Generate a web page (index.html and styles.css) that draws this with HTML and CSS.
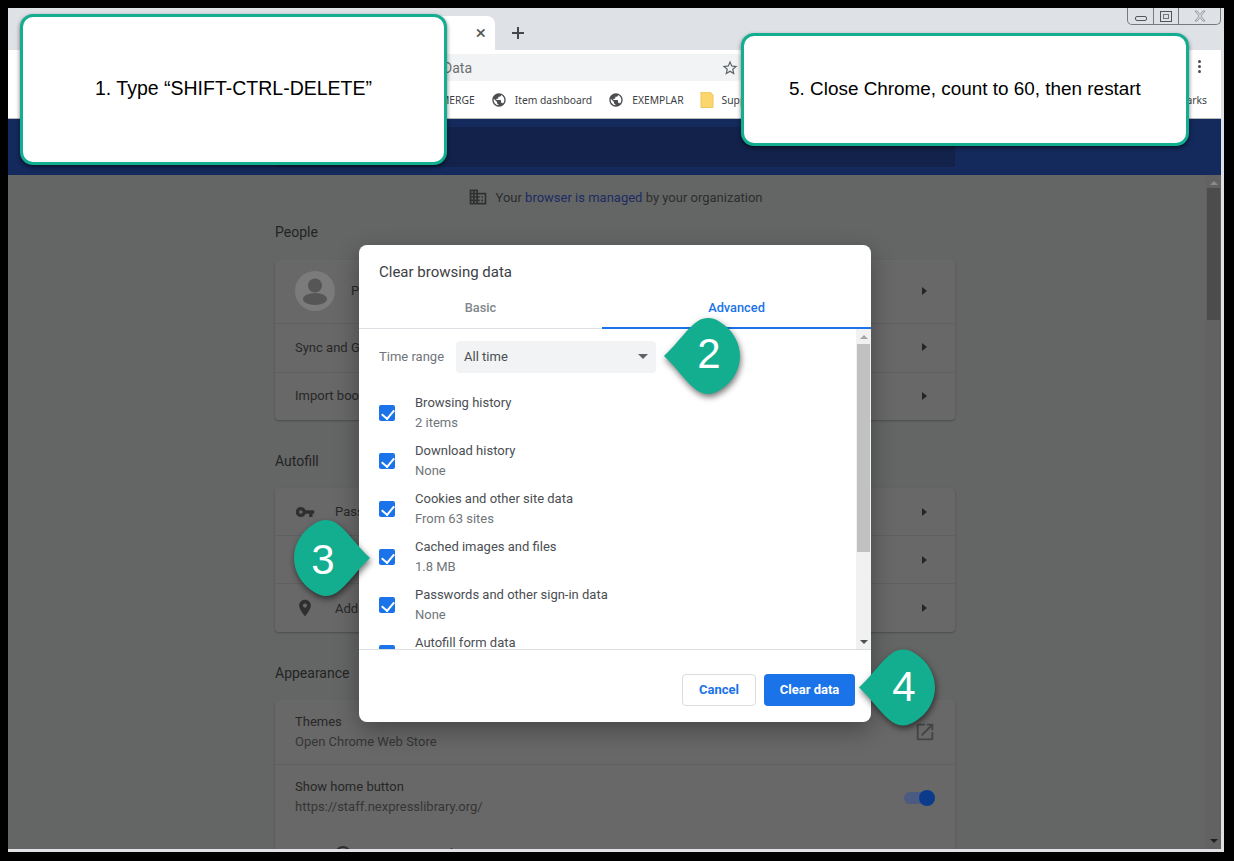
FILE: index.html
```html
<!DOCTYPE html>
<html lang="en">

<head>
    <title>Clear browsing data</title>
    <link rel="stylesheet" href="styles.css">
</head>

<body>
    <div class="window">
        <div class="tabstrip">
            <div class="tab">
                <span class="tabTitle">Settings - Clear browsing data</span>
                <span class="tabClose">&#215;</span>
            </div>
            <svg class="newTab" width="14" height="14" viewBox="0 0 14 14"><path d="M6 1h2v5h5v2H8v5H6V8H1V6h5z" /></svg>
            <div class="winControls">
                <span class="winBtn minBtn"><i></i></span>
                <span class="winBtn maxBtn"><i></i></span>
                <span class="winBtn closeBtn">
                    <svg width="14" height="12" viewBox="0 0 14 12"><path d="M2 1h2l3 3.5L10 1h2L8 6l4 5h-2L7 7.5 4 11H2l4-5z" /></svg>
                </span>
            </div>
        </div>

        <div class="toolbar">
            <div class="omnibox">
                <span class="url">Chrome | chrome://settings/clearBrowserData</span>
                <svg class="star" width="18" height="18" viewBox="0 0 24 24"><path d="M22 9.24l-7.19-.62L12 2 9.19 8.63 2 9.24l5.46 4.73L5.82 21 12 17.27 18.18 21l-1.63-7.03L22 9.24zM12 15.4l-3.76 2.27 1-4.28-3.32-2.88 4.38-.38L12 6.1l1.71 4.04 4.38.38-3.32 2.88 1 4.28L12 15.4z" /></svg>
            </div>
            <div class="menuDots"><i></i><i></i><i></i></div>
        </div>

        <div class="bookmarks">
            <span class="bookmark">MERGE</span>
            <span class="bookmark">
                <svg width="16" height="16" viewBox="0 0 24 24"><use href="#globe" /></svg>
                Item dashboard
            </span>
            <span class="bookmark">
                <svg width="16" height="16" viewBox="0 0 24 24"><use href="#globe" /></svg>
                EXEMPLAR
            </span>
            <span class="bookmark">
                <svg width="14" height="16" viewBox="0 0 14 16"><path d="M1 0h9l3 3v12.5H1z" fill="#fbd66f" stroke="#efc458" /></svg>
                Support
            </span>
            <span class="bookmark otherMarks">Other bookmarks</span>
        </div>

        <div class="navy">
            <div class="searchBand"></div>
        </div>

        <div class="main">
            <div class="page">
                <p class="managed">
                    <svg width="20" height="20" viewBox="0 0 24 24"><path d="M12 7V3H2v18h20V7H12zM6 19H4v-2h2v2zm0-4H4v-2h2v2zm0-4H4V9h2v2zm0-4H4V5h2v2zm4 12H8v-2h2v2zm0-4H8v-2h2v2zm0-4H8V9h2v2zm0-4H8V5h2v2zm10 12h-8v-2h2v-2h-2v-2h2v-2h-2V9h8v10zm-2-8h-2v2h2v-2zm0 4h-2v2h2v-2z" /></svg>
                    <span>Your <a class="managedLink">browser is managed</a> by your organization</span>
                </p>

                <h2 class="sectionTitle firstTitle">People</h2>
                <div class="card">
                    <div class="row rowPerson">
                        <span class="avatar">
                            <svg width="40" height="40" viewBox="0 0 40 40"><circle cx="20" cy="14.500" r="7" /><ellipse cx="20" cy="28" rx="12" ry="6" /></svg>
                        </span>
                        <span class="rowText">Person 1</span>
                        <i class="arrow"></i>
                    </div>
                    <div class="row rowMid"><span>Sync and Google services</span><i class="arrow"></i></div>
                    <div class="row rowLast"><span>Import bookmarks and settings</span><i class="arrow"></i></div>
                </div>

                <h2 class="sectionTitle">Autofill</h2>
                <div class="card">
                    <div class="row rowIcon">
                        <svg width="20" height="20" viewBox="0 0 24 24"><path d="M12.65 10C11.83 7.67 9.61 6 7 6c-3.31 0-6 2.69-6 6s2.69 6 6 6c2.61 0 4.83-1.67 5.65-4H17v4h4v-4h2v-4H12.65zM7 14c-1.1 0-2-.9-2-2s.9-2 2-2 2 .9 2 2-.9 2-2 2z" /></svg>
                        <span>Passwords</span><i class="arrow"></i>
                    </div>
                    <div class="row rowIcon">
                        <svg width="20" height="20" viewBox="0 0 24 24"></svg>
                        <span>Payment methods</span><i class="arrow"></i>
                    </div>
                    <div class="row rowIcon rowLast">
                        <svg width="20" height="20" viewBox="0 0 24 24"><path d="M12 2C8.13 2 5 5.130 5 9c0 5.250 7 13 7 13s7-7.750 7-13c0-3.870-3.130-7-7-7zm0 9.500c-1.380 0-2.500-1.120-2.500-2.500s1.120-2.500 2.500-2.500 2.500 1.120 2.500 2.500-1.120 2.500-2.500 2.500z" /></svg>
                        <span>Addresses and more</span><i class="arrow"></i>
                    </div>
                </div>

                <h2 class="sectionTitle">Appearance</h2>
                <div class="card cardOpen">
                    <div class="row rowTwo">
                        <div class="rowStack"><span>Themes</span><small>Open Chrome Web Store</small></div>
                        <svg class="extLink" width="22" height="22" viewBox="0 0 24 24"><path d="M19 19H5V5h7V3H5c-1.110 0-2 .9-2 2v14c0 1.100.89 2 2 2h14c1.100 0 2-.9 2-2v-7h-2v7zM14 3v2h3.590l-9.830 9.830 1.410 1.410L19 6.410V10h2V3h-7z" /></svg>
                    </div>
                    <div class="row rowTwo rowLast">
                        <div class="rowStack"><span>Show home button</span><small>https://staff.nexpresslibrary.org/</small></div>
                        <span class="toggle"><i></i></span>
                    </div>
                    <div class="row rowRadio">
                        <i class="radio"></i><span>New Tab page</span>
                    </div>
                </div>
            </div>

            <div class="pageScroll">
                <i class="arrowUp"></i>
                <div class="pageThumb"></div>
                <i class="arrowDown"></i>
            </div>
        </div>

        <div class="dialog">
            <h1 class="dialogTitle">Clear browsing data</h1>
            <div class="tabs">
                <div class="dlgTab">Basic</div>
                <div class="dlgTab dlgTabOn">Advanced</div>
            </div>
            <div class="dialogBody">
                <div class="options">
                    <div class="timeRange">
                        <span class="timeLabel">Time range</span>
                        <div class="select">All time<i class="selectArrow"></i></div>
                    </div>
                    <div class="option"><i class="check"></i><div><p>Browsing history</p><p class="optSub">2 items</p></div></div>
                    <div class="option"><i class="check"></i><div><p>Download history</p><p class="optSub">None</p></div></div>
                    <div class="option"><i class="check"></i><div><p>Cookies and other site data</p><p class="optSub">From 63 sites</p></div></div>
                    <div class="option"><i class="check"></i><div><p>Cached images and files</p><p class="optSub">1.8 MB</p></div></div>
                    <div class="option"><i class="check"></i><div><p>Passwords and other sign-in data</p><p class="optSub">None</p></div></div>
                    <div class="option"><i class="check"></i><div><p>Autofill form data</p><p class="optSub">None</p></div></div>
                </div>
                <div class="dlgScroll">
                    <i class="arrowUp"></i>
                    <div class="dlgThumb"></div>
                    <i class="arrowDown"></i>
                </div>
            </div>
            <div class="dialogFoot">
                <button class="btn btnCancel">Cancel</button>
                <button class="btn btnClear">Clear data</button>
            </div>
        </div>
    </div>

    <div class="callout calloutOne">1. Type &#8220;SHIFT-CTRL-DELETE&#8221;</div>
    <div class="callout calloutFive">5. Close Chrome, count to 60, then restart</div>

    <div class="marker markerTwo">
        <svg width="76" height="78" viewBox="0 0 76 78"><use href="#drop" /></svg>
        <span>2</span>
    </div>
    <div class="marker markerThree">
        <svg width="78" height="78" viewBox="0 0 76 78"><use href="#drop" transform="translate(76 0) scale(-1 1)" /></svg>
        <span>3</span>
    </div>
    <div class="marker markerFour">
        <svg width="76" height="79" viewBox="0 0 76 78"><use href="#drop" /></svg>
        <span>4</span>
    </div>

    <svg class="defs" width="0" height="0">
        <symbol id="globe" viewBox="0 0 24 24">
            <path d="M12 2C6.480 2 2 6.480 2 12s4.480 10 10 10 10-4.480 10-10S17.520 2 12 2zm-1 17.930c-3.950-.49-7-3.850-7-7.930 0-.62.08-1.210.21-1.790L9 15v1c0 1.100.9 2 2 2v1.930zm6.900-2.540c-.26-.81-1-1.390-1.900-1.390h-1v-3c0-.55-.45-1-1-1H8v-2h2c.55 0 1-.45 1-1V7h2c1.100 0 2-.9 2-2v-.41c2.930 1.190 5 4.060 5 7.410 0 2.080-.8 3.970-2.100 5.390z" />
        </symbol>
        <symbol id="drop" viewBox="0 0 76 78">
            <path d="M0 39 C14 26 24 10 34 4 C42 -1 50 1 56 5 C69 13 76 26 76 39 C76 52 69 65 56 73 C50 77 42 79 34 74 C24 68 14 52 0 39 Z" />
        </symbol>
    </svg>
</body>

</html>
```

FILE: styles.css
```css
* {
    margin: 0;
    padding: 0;
    box-sizing: border-box;
}

html,
body {
    width: 100%;
    height: 100%;
    overflow: hidden;
}

body {
    position: relative;
    background-color: #000;
    padding: 8px 0 0 8px;
    font-family: Roboto, "Liberation Sans", sans-serif;
    font-size: 13px;
}

i {
    display: block;
}

.window {
    position: relative;
    width: 1216px;
    height: 844px;
    display: flex;
    flex-direction: column;
    overflow: hidden;
    border-right: 3px solid #dfe1e5;
    border-bottom: 3px solid #dfe1e5;
}

/* browser chrome */
.tabstrip {
    height: 42px;
    flex: none;
    display: flex;
    align-items: flex-end;
    background-color: #dee1e6;
    padding-left: 100px;
}

.tab {
    width: 387px;
    height: 34px;
    display: flex;
    align-items: center;
    justify-content: space-between;
    padding: 0 9px 0 40px;
    background-color: #fff;
    border-radius: 8px 8px 0 0;
    color: #3c4043;
    font-size: 12px;
}

.tabClose {
    font-size: 19px;
    color: #555;
    line-height: 18px;
}

.newTab {
    fill: #45484b;
    margin: 0 0 10px 16px;
}

.winControls {
    display: flex;
    height: 17px;
    margin: 0 0 auto auto;
    border: 1px solid #77797c;
    border-top: 0;
    border-radius: 0 0 5px 5px;
}

.winBtn {
    display: flex;
    align-items: center;
    justify-content: center;
    border-right: 1px solid #77797c;
    width: 25px;
}

.minBtn {
    width: 26px;
}

.minBtn i {
    width: 12px;
    height: 5px;
    margin-top: 5px;
    border: 1px solid #555;
    border-radius: 2px;
}

.maxBtn i {
    width: 12px;
    height: 11px;
    border: 1px solid #555;
    box-shadow: inset 0 0 0 2px #dee1e6, inset 0 0 0 3px #777;
}

.closeBtn {
    width: 41px;
    border-right: 0;
}

.closeBtn svg {
    fill: #dee1e6;
    stroke: #8a8c8f;
    stroke-width: .8;
}

.toolbar {
    height: 32px;
    flex: none;
    display: flex;
    align-items: center;
    background-color: #fff;
}

.omnibox {
    width: 640px;
    height: 27px;
    margin: 3px 0 0 100px;
    display: flex;
    align-items: center;
    justify-content: space-between;
    padding: 0 9px 0 0;
    background-color: #f1f3f4;
    border-radius: 14px;
    color: #6c6f72;
    font-size: 14px;
}

.url {
    width: 364px;
    white-space: nowrap;
    text-align: right;
}

.star {
    fill: #5f6368;
}

.menuDots {
    margin-left: auto;
    margin-right: 20px;
}

.menuDots i {
    width: 3px;
    height: 3px;
    margin: 2px 0;
    background-color: #4a4c4f;
    border-radius: 50%;
}

.bookmarks {
    height: 37px;
    flex: none;
    display: flex;
    align-items: center;
    gap: 16px;
    padding: 0 14px 0 432px;
    background-color: #fff;
    border-bottom: 1px solid #b7b9bb;
    color: #3c4043;
    font-family: "Noto Sans", sans-serif;
    font-size: 10.300px;
}

.bookmark {
    display: flex;
    align-items: center;
    gap: 8px;
    white-space: nowrap;
}

.bookmark svg {
    fill: #4b4d50;
}

.otherMarks {
    margin-left: auto;
}

.navy {
    height: 56px;
    flex: none;
    padding: 8px 266px 8px 267px;
    background-color: #14295c;
}

.searchBand {
    height: 40px;
    background-color: #12224b;
}

/* settings page under the scrim */
.main {
    flex: 1;
    display: flex;
    overflow: hidden;
    background-color: #646665;
}

.page {
    flex: 1;
    padding: 12px 0 0 267px;
    color: #272727;
}

.managed {
    width: 680px;
    height: 20px;
    display: flex;
    align-items: center;
    justify-content: center;
    gap: 8px;
    color: #2d2d2d;
}

.managed svg {
    fill: #303030;
}

.managedLink {
    color: #1c2b63;
}

.sectionTitle {
    height: 20px;
    margin: 31px 0 17px;
    font-size: 14px;
    font-weight: 400;
    line-height: 20px;
    color: #232323;
}

.firstTitle {
    margin-top: 15px;
    margin-bottom: 18px;
}

.card {
    width: 680px;
    background-color: #686868;
    border-radius: 4px;
    box-shadow: 0 1px 2px rgba(0, 0, 0, .25);
}

.cardOpen {
    border-radius: 4px 4px 0 0;
}

.row {
    height: 48px;
    display: flex;
    align-items: center;
    padding: 0 28px 0 20px;
    border-bottom: 1px solid #606060;
    white-space: nowrap;
}

.rowPerson {
    height: 64px;
    gap: 16px;
    padding-bottom: 2px;
}

.rowMid {
    height: 49px;
    padding-bottom: 2px;
}

.rowLast {
    height: 47px;
    border-bottom: 0;
    padding-bottom: 2px;
}

.rowIcon {
    gap: 20px;
}

.rowIcon svg {
    fill: #2f2f2f;
}

.rowIcon.rowLast {
    height: 48px;
    padding-bottom: 0;
}

.rowTwo {
    height: 65px;
    justify-content: space-between;
    padding-right: 20px;
}

.rowTwo.rowLast {
    height: 65px;
}

.rowStack {
    display: flex;
    flex-direction: column;
    gap: 0;
    line-height: 20px;
}

.rowStack small {
    font-size: 13px;
    color: #353535;
}

.avatar {
    width: 40px;
    height: 40px;
    border-radius: 50%;
    overflow: hidden;
    background-color: #7b7b7b;
}

.avatar svg {
    display: block;
    fill: #565656;
}

.arrow {
    width: 0;
    height: 0;
    margin-left: auto;
    border-left: 5px solid #252525;
    border-top: 4px solid transparent;
    border-bottom: 4px solid transparent;
}

.extLink {
    fill: #444;
    margin-right: -1px;
}

.toggle {
    position: relative;
    width: 28px;
    height: 12px;
    margin: 2px 3px 0 0;
    background-color: #4a5a80;
    border-radius: 6px;
}

.toggle i {
    position: absolute;
    top: -2px;
    right: -3px;
    width: 16px;
    height: 16px;
    background-color: #0c3b8c;
    border-radius: 50%;
}

.rowRadio {
    gap: 56px;
    padding: 16px 0 0 60px;
    align-items: flex-start;
    border-bottom: 0;
}

.radio {
    width: 16px;
    height: 16px;
    border: 2px solid #2f2f2f;
    border-radius: 50%;
}

.pageScroll {
    width: 15px;
    flex: none;
    display: flex;
    flex-direction: column;
    align-items: center;
    padding: 6px 0 6px;
    background-color: #616261;
}

.pageThumb {
    width: 13px;
    height: 132px;
    margin: 3px 0 auto;
    background-color: #4c4c4c;
}

.arrowUp,
.arrowDown {
    width: 0;
    height: 0;
    border-left: 4px solid transparent;
    border-right: 4px solid transparent;
}

.pageScroll .arrowUp {
    border-bottom: 4px solid #8a8a8a;
}

.pageScroll .arrowDown {
    border-top: 4px solid #202020;
}

/* dialog */
.dialog {
    position: absolute;
    top: 237px;
    left: 351px;
    width: 512px;
    height: 477px;
    display: flex;
    flex-direction: column;
    overflow: hidden;
    background-color: #fff;
    border-radius: 8px;
    box-shadow: 0 8px 24px rgba(0, 0, 0, .32);
    color: #4a4e52;
}

.dialogTitle {
    height: 43px;
    flex: none;
    padding: 17px 20px 0;
    font-size: 15px;
    font-weight: 400;
    line-height: 20px;
    color: #3c4043;
}

.tabs {
    height: 41px;
    flex: none;
    display: grid;
    grid-template-columns: 243px 269px;
    border-bottom: 1px solid #dcdfe3;
    font-weight: 500;
    font-size: 12.800px;
}

.dlgTab {
    padding-top: 12px;
    text-align: center;
    color: #80868b;
}

.dlgTabOn {
    color: #1a73e8;
    border-bottom: 2px solid #1a73e8;
    margin-bottom: -1px;
}

.dialogBody {
    height: 321px;
    flex: none;
    display: flex;
    overflow: hidden;
    border-bottom: 1px solid #dadce0;
}

.options {
    flex: 1;
    padding: 12px 0 0 20px;
}

.timeRange {
    height: 32px;
    display: flex;
    align-items: center;
    gap: 12px;
    margin-bottom: 16px;
}

.timeLabel {
    color: #70757a;
    margin-top: -1px;
}

.select {
    width: 200px;
    height: 32px;
    display: flex;
    align-items: center;
    justify-content: space-between;
    padding: 0 8px 2px;
    background-color: #f1f3f4;
    border-radius: 4px;
}

.selectArrow {
    width: 0;
    height: 0;
    border-top: 5px solid #5f6368;
    border-left: 5px solid transparent;
    border-right: 5px solid transparent;
}

.option {
    height: 48px;
    display: flex;
    align-items: center;
    gap: 20px;
    line-height: 20px;
}

.check {
    position: relative;
    width: 16px;
    height: 16px;
    flex: none;
    background-color: #1a73e8;
    border-radius: 2px;
}

.check::after {
    content: "";
    position: absolute;
    top: 2px;
    left: 5px;
    width: 6px;
    height: 10px;
    border: solid #fff;
    border-width: 0 2px 2px 0;
    transform: rotate(40deg);
}

.optSub {
    color: #70757a;
}

.dlgScroll {
    width: 15px;
    flex: none;
    display: flex;
    flex-direction: column;
    align-items: center;
    padding: 6px 0 5px;
    background-color: #f1f1f1;
    margin-right: 0;
}

.dlgThumb {
    width: 13px;
    height: 208px;
    margin: 5px 0 auto;
    background-color: #c1c1c1;
}

.dlgScroll .arrowUp {
    border-bottom: 4px solid #a3a3a3;
}

.dlgScroll .arrowDown {
    border-top: 4px solid #505050;
}

.dialogFoot {
    flex: 1;
    display: flex;
    justify-content: flex-end;
    gap: 8px;
    padding: 24px 16px 0 0;
}

.btn {
    height: 32px;
    padding-bottom: 2px;
    border-radius: 4px;
    font-family: Roboto, sans-serif;
    font-size: 13px;
    font-weight: 700;
}

.btnCancel {
    width: 74px;
    background-color: #fff;
    border: 1px solid #dadce0;
    color: #1a73e8;
}

.btnClear {
    width: 91px;
    background-color: #1a73e8;
    border: 0;
    color: #fff;
}

/* annotations on top of the screenshot */
.callout {
    position: absolute;
    display: flex;
    align-items: center;
    justify-content: center;
    background-color: #fff;
    border: 3.500px solid #12ae8f;
    border-radius: 13px;
    box-shadow: 0 2px 4px rgba(0, 0, 0, .55);
    color: #000;
    font-family: "Liberation Sans", Arial, sans-serif;
    padding-bottom: 2px;
}

.calloutOne {
    top: 14px;
    left: 20px;
    width: 427px;
    height: 151px;
    font-size: 19.500px;
}

.calloutFive {
    top: 33px;
    left: 741px;
    width: 448px;
    height: 113px;
    font-size: 18.900px;
}

.marker {
    position: absolute;
    display: grid;
    align-items: center;
    justify-items: center;
    color: #fff;
    font-family: "Liberation Sans", Arial, sans-serif;
    font-size: 42px;
}

.marker svg,
.marker span {
    grid-area: 1 / 1;
}

.marker span {
    position: relative;
    z-index: 1;
}

.marker svg {
    fill: #12ae8f;
    filter: drop-shadow(1px 3px 3px rgba(0, 0, 0, .55));
}

.markerTwo {
    top: 317px;
    left: 664px;
}

.markerTwo span {
    padding: 0 0 4px 14px;
}

.markerThree {
    top: 519px;
    left: 293px;
}

.markerThree span {
    padding: 4px 18px 0 0;
}

.markerFour {
    top: 648px;
    left: 859px;
}

.markerFour span {
    padding: 0 0 2px 14px;
}

.defs {
    position: absolute;
}
```
